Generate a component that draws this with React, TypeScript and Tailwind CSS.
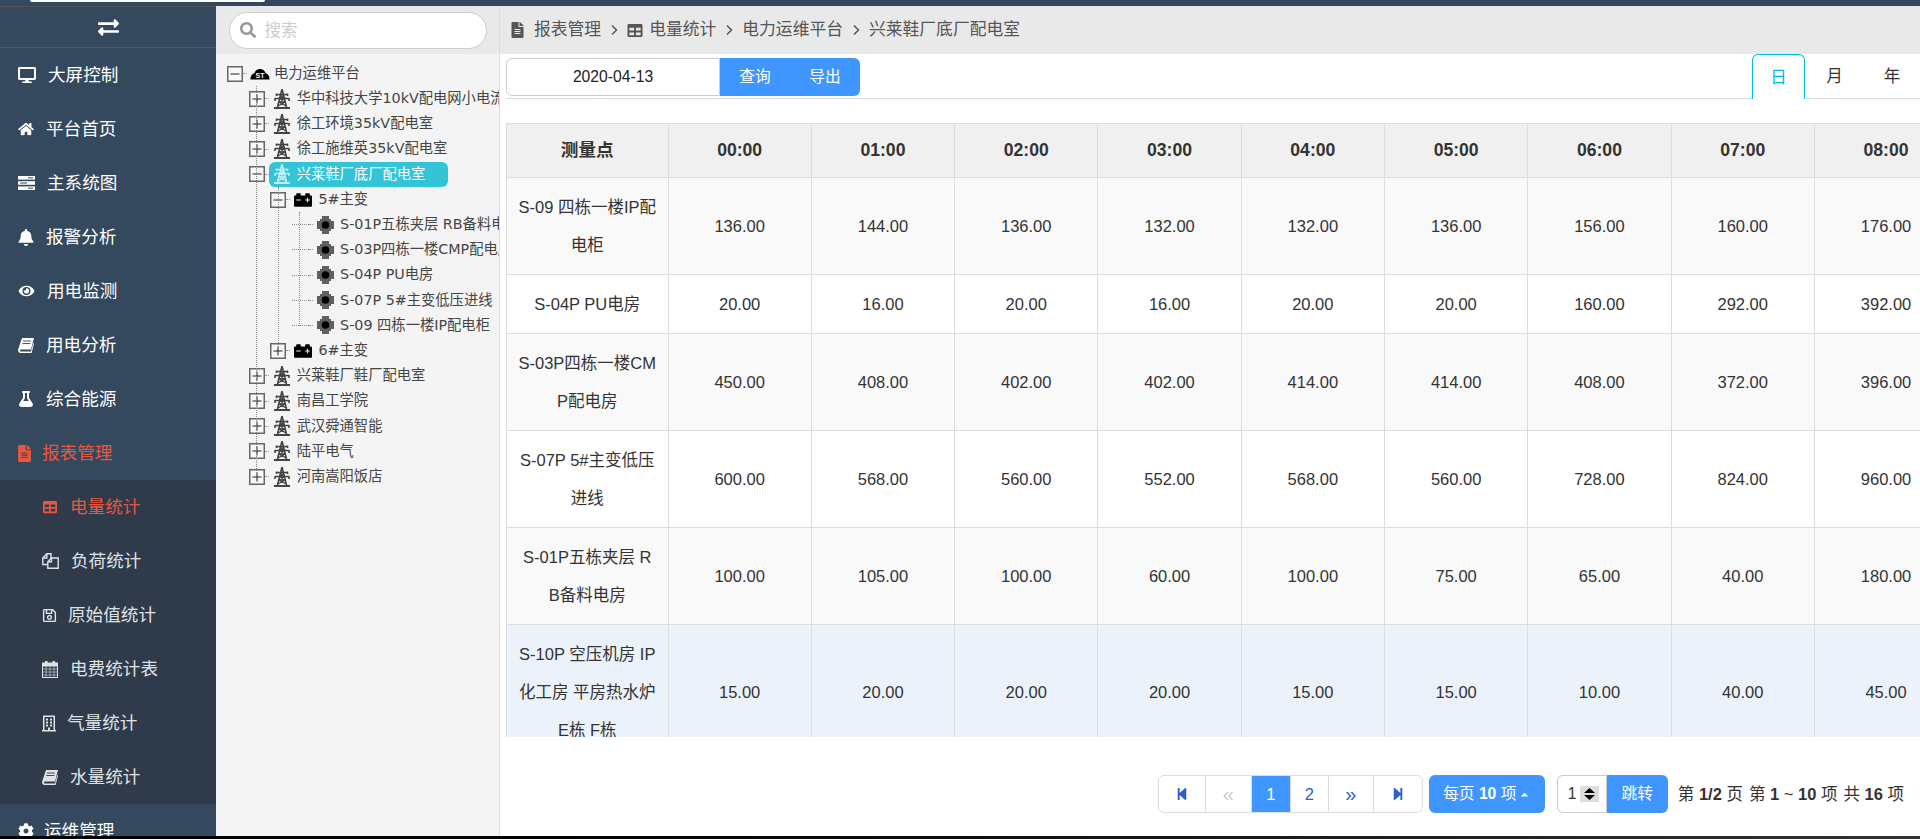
import { ReactNode } from "react"
import {
    FaBell,
    FaCarBattery,
    FaCaretUp,
    FaCog,
    FaDesktop,
    FaExchangeAlt,
    FaEye,
    FaFileAlt,
    FaFlask,
    FaHome,
    FaRegBuilding,
    FaRegSave,
    FaSearch,
    FaStepBackward,
    FaStepForward,
    FaTable,
} from "react-icons/fa"

function SlantBook({ className }: { className?: string }) {
    return (
        <svg viewBox="0 0 16 15" className={className}>
            <path d="M4 0 H16 L13 11.5 H3.2 C1.6 11.5 1.6 13.5 3.2 13.5 H13 L15.3 5 L16 5.5 L13.6 15 H2.6 C0.4 15 -0.3 13 0.3 11 Z" fill="currentColor" />
            <path d="M5 3 H13 M4.4 5.5 H12.4" stroke="#34495e" strokeWidth="0.9" />
        </svg>
    )
}

function Bars({ className }: { className?: string }) {
    return (
        <svg viewBox="0 0 17 14" className={className}>
            <rect y="0" width="17" height="3.6" fill="currentColor" />
            <rect y="5.2" width="17" height="3.6" fill="currentColor" />
            <rect y="10.4" width="17" height="3.6" fill="currentColor" />
            <path d="M10 1.8 H15 M2 7 H9 M10 12.2 H15" stroke="#34495e" />
        </svg>
    )
}

function Files({ className }: { className?: string }) {
    return (
        <svg viewBox="0 0 17 16" fill="none" stroke="currentColor" strokeWidth="1.4" className={className}>
            <path d="M5.5 11.5 H0.8 V5 L4.8 0.8 H9 V5" />
            <path d="M0.8 5 H4.8 V0.8" />
            <path d="M9.5 5 H16.2 V15.2 H5.8 V8.8 Z" />
            <path d="M5.8 8.8 H9.5 V5" />
        </svg>
    )
}

function CalendarGrid({ className }: { className?: string }) {
    return (
        <svg viewBox="0 0 16 17" className={className}>
            <rect x="0.5" y="2" width="15" height="14.5" fill="none" stroke="currentColor" />
            <rect x="0.5" y="2" width="15" height="3.5" fill="currentColor" />
            <rect x="3" y="0" width="2.5" height="4" fill="currentColor" />
            <rect x="10.5" y="0" width="2.5" height="4" fill="currentColor" />
            <path d="M4 5.5 V16 M8 5.5 V16 M12 5.5 V16 M1 8 H15 M1 11 H15 M1 14 H15" stroke="currentColor" strokeWidth="0.8" opacity="0.75" />
        </svg>
    )
}

const menu = [
    { icon: <FaDesktop className="h-[16px] w-[18px]" />, label: "大屏控制", slot: "w-[30px]" },
    { icon: <FaHome className="h-[14px] w-[16px]" />, label: "平台首页", slot: "w-[28px]" },
    { icon: <Bars className="h-[14px] w-[17px]" />, label: "主系统图", slot: "w-[29px]" },
    { icon: <FaBell className="h-[17px] w-[16px]" />, label: "报警分析", slot: "w-[28px]" },
    { icon: <FaEye className="h-[14px] w-[17px]" />, label: "用电监测", slot: "w-[29px]" },
    { icon: <SlantBook className="h-[15px] w-[16px]" />, label: "用电分析", slot: "w-[28px]" },
    { icon: <FaFlask className="h-[16px] w-[16px]" />, label: "综合能源", slot: "w-[28px]" },
]

const subMenu = [
    { icon: <FaTable className="h-[14px] w-[16px]" />, label: "电量统计", slot: "w-[28px]", active: true },
    { icon: <Files className="h-[16px] w-[17px]" />, label: "负荷统计", slot: "w-[29px]" },
    { icon: <FaRegSave className="h-[15px] w-[15px]" />, label: "原始值统计", slot: "w-[26px]" },
    { icon: <CalendarGrid className="h-[17px] w-[16px]" />, label: "电费统计表", slot: "w-[28px]" },
    { icon: <FaRegBuilding className="h-[17px] w-[14px]" />, label: "气量统计", slot: "w-[25px]" },
    { icon: <SlantBook className="h-[15px] w-[16px] [&_path:last-child]:stroke-[#2f3b4a]" />, label: "水量统计", slot: "w-[28px]" },
]

const hours = ["00:00", "01:00", "02:00", "03:00", "04:00", "05:00", "06:00", "07:00", "08:00"]

const rows = [
    { name: ["S-09 四栋一楼IP配", "电柜"], bg: "bg-[#f9f9f9]", values: ["136.00", "144.00", "136.00", "132.00", "132.00", "136.00", "156.00", "160.00", "176.00"] },
    { name: ["S-04P PU电房"], bg: "bg-white", values: ["20.00", "16.00", "20.00", "16.00", "20.00", "20.00", "160.00", "292.00", "392.00"] },
    { name: ["S-03P四栋一楼CM", "P配电房"], bg: "bg-[#f9f9f9]", values: ["450.00", "408.00", "402.00", "402.00", "414.00", "414.00", "408.00", "372.00", "396.00"] },
    { name: ["S-07P 5#主变低压", "进线"], bg: "bg-white", values: ["600.00", "568.00", "560.00", "552.00", "568.00", "560.00", "728.00", "824.00", "960.00"] },
    { name: ["S-01P五栋夹层 R", "B备料电房"], bg: "bg-[#f9f9f9]", values: ["100.00", "105.00", "100.00", "60.00", "100.00", "75.00", "65.00", "40.00", "180.00"] },
    { name: ["S-10P 空压机房 IP", "化工房 平房热水炉", "E栋 F栋"], bg: "bg-[#ebf2fa]", values: ["15.00", "20.00", "20.00", "20.00", "15.00", "15.00", "10.00", "40.00", "45.00"] },
]

function Pylon({ light }: { light?: boolean }) {
    return (
        <svg width="18" height="20" viewBox="0 0 18 20" fill="none" stroke="currentColor" strokeWidth="1.6" className={`shrink-0 ${light ? "opacity-70" : ""}`}>
            <path d="M9 0 L4.5 18 M9 0 L13.5 18" />
            <path d="M3.5 5.5 H14.5 M2 9.5 H16 M3.5 4.5 V7 M14.5 4.5 V7 M2 9 V12 M16 9 V12" />
            <path d="M7 6 L11.5 9.5 L6 13 L13 17 M11 6 L6.5 9.5 L12 13 L5 17 M6 13 H12" strokeWidth="1.3" />
            <path d="M1 19 H17" strokeWidth="2" />
        </svg>
    )
}

function Meter() {
    return (
        <svg width="17" height="18" viewBox="0 0 17 18" className="shrink-0">
            <path d="M5 0 H12 V3 H14 V5 H17 V13 H14 V15 H12 V18 H5 V15 H3 V13 H0 V5 H3 V3 H5 Z" fill="#5f5f5f" />
            <circle cx="8.5" cy="9" r="3.8" fill="#000" />
        </svg>
    )
}

function RootIcon() {
    return (
        <svg width="20" height="13" viewBox="0 0 20 13" className="-mr-[2px] -ml-[1px] shrink-0">
            <path d="M0.5 12.5 C0.5 8.5 2 7 4.5 6 C6 0.5 14 0.5 15.5 6 C18 7 19.5 8.5 19.5 12.5 Z" fill="#000" />
            <text x="10" y="11" textAnchor="middle" fontSize="7" fontWeight="700" fill="#fff" fontFamily="Liberation Sans">ST</text>
        </svg>
    )
}

function Toggle({ open }: { open: boolean }) {
    return (
        <svg width="16" height="16" viewBox="0 0 16 16" className="shrink-0">
            <rect x="0.75" y="0.75" width="14.5" height="14.5" fill="#f8f8f8" stroke="#666" strokeWidth="1.5" />
            <path d={open ? "M3.5 8 H12.5" : "M3.5 8 H12.5 M8 3.5 V12.5"} stroke="#222" fill="none" />
        </svg>
    )
}

function Chevron() {
    return (
        <svg width="10" height="14" viewBox="0 0 10 14" fill="none" stroke="currentColor" strokeWidth="1.5" className="mx-[8px] shrink-0">
            <path d="M3 2.5 L7.5 7 L3 11.5" />
        </svg>
    )
}

function Battery() {
    return <FaCarBattery size={18} className="shrink-0 text-black" />
}

// one line of the tree: toggle (or dotted stub), icon, label
function TreeRow({ toggle, icon, label, active }: { toggle?: "open" | "closed"; icon: ReactNode; label: string; active?: boolean }) {
    return (
        <div className="flex h-[25.2px] items-center whitespace-nowrap">
            {toggle ? (
                <Toggle open={toggle === "open"} />
            ) : (
                <span className="w-[17px] shrink-0 border-t border-dotted border-[#888]" />
            )}
            <span className="w-[4px] shrink-0 border-t border-dotted border-[#999]" />
            <span
                className={
                    active
                        ? "flex h-[25px] w-[179px] items-center gap-[6px] rounded-[6px] bg-[#33c4d8] pl-[4px] text-white"
                        : "flex items-center gap-[6px] pl-[4px] text-[#444]"
                }
            >
                {icon}
                <span>{label}</span>
            </span>
        </div>
    )
}

function TreeGroup({ children, left, bottom }: { children: ReactNode; left: string; bottom: string }) {
    return (
        <div className="relative pl-[21.7px]">
            <span className={`absolute top-0 border-l border-dotted border-[#888] ${left} ${bottom}`} />
            {children}
        </div>
    )
}

function Sidebar() {
    return (
        <aside className="w-[216px] shrink-0 overflow-hidden bg-[#34495e] text-[17.6px]">
            <div className="flex h-[42px] items-center justify-center border-y border-[#555] text-white">
                <FaExchangeAlt size={21} />
            </div>
            {menu.map((m) => (
                <div key={m.label} className="flex h-[54px] items-center pl-[18px] text-white">
                    <span className={`shrink-0 ${m.slot}`}>{m.icon}</span>
                    <span>{m.label}</span>
                </div>
            ))}
            <div className="flex h-[54px] items-center pl-[18px] text-[#e9573f]">
                <span className="w-[24px] shrink-0"><FaFileAlt className="h-[17px] w-[13px]" /></span>
                <span>报表管理</span>
            </div>
            <div className="bg-[#2f3b4a] text-[#dfe3e6]">
                {subMenu.map((m) => (
                    <div key={m.label} className={`flex h-[54px] items-center pl-[42px] ${m.active ? "text-[#e9573f]" : ""}`}>
                        <span className={`shrink-0 ${m.slot}`}>{m.icon}</span>
                        <span>{m.label}</span>
                    </div>
                ))}
            </div>
            <div className="flex h-[54px] items-center pl-[18px] text-white">
                <span className="w-[26px] shrink-0"><FaCog className="h-[16px] w-[16px]" /></span>
                <span>运维管理</span>
            </div>
        </aside>
    )
}

function TreePanel() {
    return (
        <section className="flex w-[284px] shrink-0 flex-col border-r border-[#ddd] bg-[#f4f4f4]">
            <div className="flex h-[48px] shrink-0 items-center bg-[#e9e9e9] px-[12.5px]">
                <div className="flex h-[37px] w-[258px] items-center gap-[9px] rounded-full border border-[#ccc] bg-white pl-[10px] text-[16.5px] text-[#ccc]">
                    <FaSearch size={16} className="text-[#999]" />
                    <span>搜索</span>
                </div>
            </div>
            <div className="flex-1 overflow-hidden pt-[7px] pl-[11px] [font-family:'DejaVu_Sans','Noto_Sans_CJK_SC',sans-serif] text-[14.3px]">
                <TreeRow toggle="open" icon={<RootIcon />} label="电力运维平台" />
                <TreeGroup left="left-[29px]" bottom="bottom-[14px]">
                    <TreeRow toggle="closed" icon={<Pylon />} label="华中科技大学10kV配电网小电流接地" />
                    <TreeRow toggle="closed" icon={<Pylon />} label="徐工环境35kV配电室" />
                    <TreeRow toggle="closed" icon={<Pylon />} label="徐工施维英35kV配电室" />
                    <TreeRow toggle="open" icon={<Pylon light />} label="兴莱鞋厂底厂配电室" active />
                    <TreeGroup left="left-[29px]" bottom="bottom-[14px]">
                        <TreeRow toggle="open" icon={<Battery />} label="5#主变" />
                        <TreeGroup left="left-[29px]" bottom="bottom-[12px]">
                            <TreeRow icon={<Meter />} label="S-01P五栋夹层 RB备料电房" />
                            <TreeRow icon={<Meter />} label="S-03P四栋一楼CMP配电房" />
                            <TreeRow icon={<Meter />} label="S-04P PU电房" />
                            <TreeRow icon={<Meter />} label="S-07P 5#主变低压进线" />
                            <TreeRow icon={<Meter />} label="S-09 四栋一楼IP配电柜" />
                        </TreeGroup>
                        <TreeRow toggle="closed" icon={<Battery />} label="6#主变" />
                    </TreeGroup>
                    <TreeRow toggle="closed" icon={<Pylon />} label="兴莱鞋厂鞋厂配电室" />
                    <TreeRow toggle="closed" icon={<Pylon />} label="南昌工学院" />
                    <TreeRow toggle="closed" icon={<Pylon />} label="武汉舜通智能" />
                    <TreeRow toggle="closed" icon={<Pylon />} label="陆平电气" />
                    <TreeRow toggle="closed" icon={<Pylon />} label="河南嵩阳饭店" />
                </TreeGroup>
            </div>
        </section>
    )
}

function Breadcrumb() {
    return (
        <div className="flex h-[48px] shrink-0 items-center bg-[#e9e9e9] pl-[11px] text-[16.8px] text-[#555]">
            <FaFileAlt className="mr-[10px] h-[16px] w-[13px]" />
            <span>报表管理</span>
            <Chevron />
            <FaTable className="mr-[6px] h-[15px] w-[16px]" />
            <span>电量统计</span>
            <Chevron />
            <span>电力运维平台</span>
            <Chevron />
            <span>兴莱鞋厂底厂配电室</span>
        </div>
    )
}

function Toolbar() {
    return (
        <div className="ml-[6px] flex h-[45px] shrink-0 items-start justify-between border-b border-[#ddd] text-[15.7px]">
            <div className="mt-[4px] flex h-[38px]">
                <div className="flex w-[214px] items-center justify-center rounded-l-[6px] border border-[#ccc] bg-white text-[#222]">2020-04-13</div>
                <div className="flex w-[70px] items-center justify-center bg-[#3f96fe] text-white">查询</div>
                <div className="flex w-[70px] items-center justify-center rounded-r-[6px] bg-[#3f96fe] text-white">导出</div>
            </div>
            <div className="flex h-[45px] text-[16.5px] text-[#333]">
                <div className="flex w-[53px] items-center justify-center rounded-t-[6px] border border-b-0 border-[#00bcd4] bg-white text-[#00bcd4]">日</div>
                <div className="flex w-[59px] items-center justify-center">月</div>
                <div className="flex w-[56px] items-center justify-center">年</div>
            </div>
        </div>
    )
}

function DataTable() {
    return (
        <div className="mt-[24px] ml-[6px] h-[614px] shrink-0 overflow-hidden">
            <table className="w-[1451px] table-fixed border-collapse text-center text-[#333]">
                <colgroup>
                    <col className="w-[161.5px]" />
                    {hours.map((h) => (
                        <col key={h} className="w-[143.3px]" />
                    ))}
                </colgroup>
                <thead>
                    <tr className="h-[54px] bg-[#f0f0f0] text-[17.6px] font-bold">
                        <th className="border border-[#ddd]">测量点</th>
                        {hours.map((h) => (
                            <th key={h} className="border border-[#ddd]">{h}</th>
                        ))}
                    </tr>
                </thead>
                <tbody className="text-[16.5px] leading-[38px]">
                    {rows.map((r) => (
                        <tr key={r.name[0]} className={r.bg}>
                            <td className="border border-[#ddd] py-[10px]">
                                {r.name.map((line) => (
                                    <div key={line} className="whitespace-nowrap">{line}</div>
                                ))}
                            </td>
                            {r.values.map((v, i) => (
                                <td key={i} className="border border-[#ddd]">{v}</td>
                            ))}
                        </tr>
                    ))}
                </tbody>
            </table>
        </div>
    )
}

function PageCell({ children, className }: { children: ReactNode; className: string }) {
    return <div className={`flex items-center justify-center border-r border-[#ddd] last:border-r-0 ${className}`}>{children}</div>
}

function Pagination() {
    return (
        <div className="mt-[38px] flex h-[38px] shrink-0 items-stretch justify-end pr-[16px] text-[15.7px]">
            <div className="flex overflow-hidden rounded-[6px] border border-[#ddd] bg-white text-[16.5px] text-[#2a62c9]">
                <PageCell className="w-[47px]"><FaStepBackward className="h-[16px] w-[12px]" /></PageCell>
                <PageCell className="w-[46px] text-[20px] text-[#ccc]">«</PageCell>
                <PageCell className="w-[39px] bg-[#3f96fe] text-white">1</PageCell>
                <PageCell className="w-[38px]">2</PageCell>
                <PageCell className="w-[45px] text-[20px]">»</PageCell>
                <PageCell className="w-[48px]"><FaStepForward className="h-[16px] w-[12px]" /></PageCell>
            </div>
            <div className="ml-[6px] flex w-[116px] items-center justify-center gap-[3px] rounded-[6px] bg-[#3f96fe] text-white">
                <span>每页 <b>10</b> 项</span>
                <FaCaretUp size={11} />
            </div>
            <div className="ml-[12px] flex w-[50px] items-center gap-[3px] rounded-l-[6px] border border-[#ccc] bg-white pl-[10px] text-[#333]">
                <span>1</span>
                <svg width="19" height="16" viewBox="0 0 19 16" className="shrink-0">
                    <rect width="19" height="16" fill="#ddd" />
                    <path d="M9.5 2 L15 7 H4 Z M9.5 14 L15 9 H4 Z" fill="#000" />
                </svg>
            </div>
            <div className="flex w-[61px] items-center justify-center rounded-r-[6px] bg-[#3f96fe] text-white">跳转</div>
            <div className="ml-[10px] flex items-center gap-[6px] whitespace-nowrap text-[16.5px] text-[#333]">
                <span>第 <b>1/2</b> 页</span>
                <span>第 <b>1</b> ~ <b>10</b> 项</span>
                <span>共 <b>16</b> 项</span>
            </div>
        </div>
    )
}

export default function App() {
    return (
        <div className="flex h-screen w-full flex-col overflow-hidden bg-white [font-family:'Liberation_Sans','Noto_Sans_CJK_SC',sans-serif]">
            <div className="h-[6px] shrink-0 bg-[#34495e]">
                <div className="ml-[30px] h-[2px] w-[235px] rounded-b-[2px] bg-white" />
            </div>
            <div className="flex min-h-0 flex-1">
                <Sidebar />
                <TreePanel />
                <main className="flex min-w-0 flex-1 flex-col overflow-hidden bg-white">
                    <Breadcrumb />
                    <Toolbar />
                    <DataTable />
                    <Pagination />
                </main>
            </div>
            <div className="h-[3px] shrink-0 bg-gradient-to-r from-black to-[#333]" />
        </div>
    )
}
